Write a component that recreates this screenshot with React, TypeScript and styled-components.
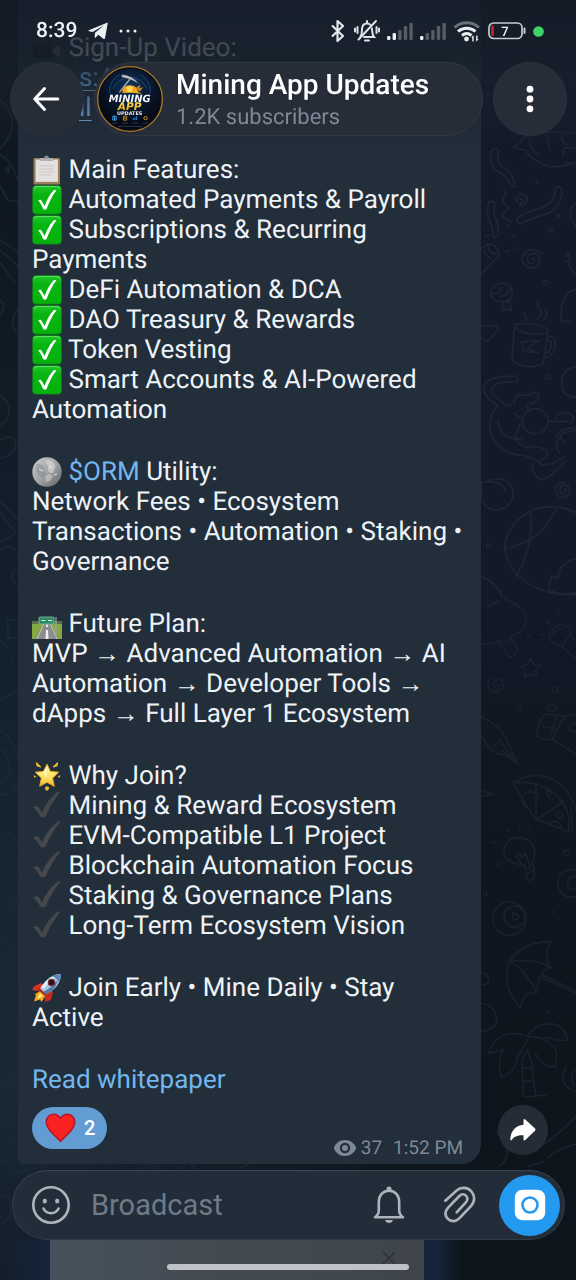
import React from "react";
import styled, { createGlobalStyle } from "styled-components";

const GlobalStyle = createGlobalStyle`
  * { box-sizing: border-box; }
  html { background: #101820; }
  body {
    margin: 0;
    font-family: Roboto, "Liberation Sans", sans-serif;
    text-rendering: geometricPrecision;
    color: #eef3f8;
  }
  button { border: 0; padding: 0; font: inherit; color: inherit; cursor: pointer; background: none; }
  svg { display: block; flex: none; }
  p, h1, ul { margin: 0; padding: 0; font-weight: 400; }
`;

const Page = styled.div`
  position: relative;
  isolation: isolate;
  min-height: 100vh;
  display: flex;
  flex-direction: column;
`;

const Wallpaper = styled.div`
  position: absolute;
  inset: 0;
  z-index: -1;
  overflow: hidden;
  background: linear-gradient(to bottom, #0e161e 0%, #101a24 25%, #142330 60%, #182834 85%, #131e28 100%);
  &::before {
    content: "";
    position: absolute;
    inset: 0;
    background: linear-gradient(to bottom, #131928 0%, #131928 45%, #0f161f 65%, #0d141b 100%);
    mask-image: linear-gradient(to right, transparent 5%, #000 80%);
  }
  svg { position: absolute; inset: 0; width: 100%; height: 100%; opacity: 0.8; }
`;

const Header = styled.header`
  position: fixed;
  top: 0;
  left: 0;
  right: 0;
  z-index: 2;
  padding-bottom: 14px;
  background: linear-gradient(
    to bottom,
    rgba(20, 28, 40, 0.84) 0%,
    rgba(22, 31, 42, 0.8) 36%,
    rgba(25, 34, 46, 0.62) 54%,
    rgba(28, 37, 49, 0.35) 76%,
    rgba(33, 45, 57, 0) 100%
  );
`;

const StatusBar = styled.div`
  display: flex;
  align-items: center;
  justify-content: space-between;
  height: 62px;
  padding: 0 32px 0 36px;
`;

const StatusGroup = styled.div<{ $gap: number }>`
  display: flex;
  align-items: center;
  gap: ${(p) => p.$gap}px;
`;

const Clock = styled.time`
  font-size: 21px;
  line-height: 24px;
  font-weight: 500;
`;

const NavRow = styled.div`
  display: flex;
  gap: 10px;
  padding: 0 9px 0 10px;
`;

const RoundButton = styled.button`
  flex: none;
  width: 74px;
  height: 74px;
  display: grid;
  place-items: center;
  border-radius: 50%;
  background: #262d39;
  border: 1px solid #2b333e;
`;

const ChatPill = styled.div`
  flex: 1;
  min-width: 0;
  height: 74px;
  display: flex;
  align-items: center;
  gap: 13px;
  padding-left: 2px;
  border-radius: 37px;
  background: #262d39;
  border: 1px solid #303842;
`;

const ChatTitle = styled.h1`
  padding-top: 4px;
  font-size: 28px;
  line-height: 32px;
  font-weight: 500;
  color: #fff;
  white-space: nowrap;
`;

const ChatMeta = styled.p`
  padding-top: 2px;
  font-size: 22px;
  line-height: 30px;
  color: #7f8894;
`;

const Chat = styled.main`
  flex: 1;
  display: flex;
  align-items: flex-end;
  gap: 17px;
  padding: 0 28px 6px 18px;
`;

const Bubble = styled.article`
  flex: 1;
  min-width: 0;
  align-self: stretch;
  padding: 33px 18px 15px 14px;
  border-radius: 0 0 20px 6px;
  background: #222e3a;
`;

const Message = styled.div`
  display: flex;
  flex-direction: column;
  gap: 32px;
  font-size: 26px;
  line-height: 30px;
`;

const LineList = styled.ul`
  list-style: none;
`;

const Link = styled.a<{ $underlined?: boolean }>`
  color: #72b7ee;
  text-decoration: ${(p) => (p.$underlined ? "underline" : "none")};
  text-decoration-thickness: 1px;
  text-underline-offset: 4px;
`;

const LinkLine = styled.p`
  padding-left: 47px;
`;

const EmojiBox = styled.span`
  display: inline-block;
  vertical-align: top;
  width: 30px;
  height: 30px;
`;

const BubbleFooter = styled.footer`
  display: flex;
  justify-content: space-between;
  align-items: flex-end;
  margin-top: 12px;
`;

const Reaction = styled.button`
  display: flex;
  align-items: center;
  gap: 8px;
  height: 42px;
  padding: 0 12px 0 13px;
  border-radius: 21px;
  background: #629cd2;
  color: #fff;
  font-size: 20px;
  line-height: 24px;
  font-weight: 500;
`;

const MessageMeta = styled.div`
  display: flex;
  align-items: center;
  gap: 4px;
  height: 22px;
  margin-bottom: -10px;
  font-size: 19px;
  line-height: 22px;
  color: #7d8995;
  time { margin-left: 7px; }
`;

const ForwardButton = styled.button`
  flex: none;
  width: 50px;
  height: 50px;
  margin-bottom: 9px;
  display: grid;
  place-items: center;
  border-radius: 50%;
  background: #242c35;
`;

const Composer = styled.form`
  display: flex;
  align-items: center;
  height: 70px;
  margin: 0 11px 0 12px;
  padding: 0 4px 0 18px;
  border-radius: 35px;
  border: 1px solid #303c48;
  border-top-color: #3b4753;
  background: #222d39;
`;

const ComposerInput = styled.input`
  flex: 1;
  min-width: 0;
  height: 40px;
  margin-left: 20px;
  padding: 0;
  border: 0;
  outline: 0;
  background: none;
  color: #eef3f8;
  font: 29px/40px Roboto, "Liberation Sans", sans-serif;
  &::placeholder { color: #6d7a88; opacity: 1; }
`;

const ComposerTools = styled.div`
  display: flex;
  align-items: center;
  gap: 38px;
  margin-right: 22px;
`;

const CameraButton = styled.button`
  flex: none;
  width: 61px;
  height: 61px;
  display: grid;
  place-items: center;
  border-radius: 50%;
  background: #2399f0;
`;

const BottomArea = styled.footer`
  position: relative;
  height: 40px;
  padding: 0 124px 0 18px;
  background: linear-gradient(to right, transparent, #14243a 8%, #14243a 76%, transparent 80%);
`;

const Keyboard = styled.div`
  height: 40px;
  display: flex;
  justify-content: flex-end;
  margin: 0 28px 0 32px;
  background: linear-gradient(to right, #46515b, #42494f 60%, #3f454b);
`;

const CloseButton = styled.button`
  width: 30px;
  height: 36px;
  margin-right: 20px;
  display: grid;
  place-items: center;
`;

const HomeIndicator = styled.div`
  position: absolute;
  left: 29%;
  right: 29%;
  bottom: 10px;
  height: 6px;
  border-radius: 3px;
  background: #bfc3c8;
`;

/* ---------- emoji ---------- */

const emojiArt = {
  clipboard: (
    <>
      <rect x="1.500" y="3" width="26.500" height="26.500" rx="1.500" fill="#9a7d58" />
      <rect x="3.500" y="4.500" width="22.500" height="22.500" fill="#d9d6d3" />
      <path d="M4 5h21.500v21H4z" fill="#e3e0de" />
      <path d="M7 11h15M7 14h15M7 17h15M7 20h12" stroke="#c9c6c5" strokeWidth="1" />
      <path d="M8 3h13v3H8z" fill="#aeb2b6" />
      <path d="M12 3.500a2.500 3 0 0 1 5 0z" fill="#858a90" />
    </>
  ),
  check: (
    <>
      <rect x="0.300" y="0.300" width="29.400" height="29.200" rx="4" fill="#0b8f12" />
      <rect x="1" y="1" width="28" height="27.500" rx="3.500" fill="url(#checkFill)" />
      <path d="M2 3.500Q3 1.500 6 1.500H24Q27 1.500 28 3.500" fill="none" stroke="#5fdd62" strokeWidth="1.200" />
      <path d="M6.200 15.500c1.800-1.300 3-.6 3.800.9l2.600 4.500C15 14.500 18 9 21.800 5.300c.8-.6 2-.3 2.500.2C20 11 17 17.500 14.600 24c-.8 1-2.600 1-3.400 0-1.500-3.500-3-6.200-5-8.500z" fill="#fff" />
    </>
  ),
  moon: (
    <>
      <circle cx="15" cy="15" r="14.700" fill="url(#moonFill)" />
      <path d="M5 7c3 0 4 0 6 2s0 4 2 6 1 4 0 6-5-1-7-4-4-5-1-10z" fill="#85878a" opacity=".5" />
      <path d="M15 3c4 0 7 2 8 5s-1 4-1 6-3 3-5 1 0-4-1-6-3-3-1-6z" fill="#dcdddd" opacity=".6" />
      <path d="M13 19l5-2 3 2-3 5-4 1z" fill="#d6d7d7" opacity=".5" />
      <path d="M7 12l4 2M22 18l3-1M17 9l3 2" stroke="#ededed" strokeWidth="1" />
    </>
  ),
  motorway: (
    <>
      <rect x="0" y="13" width="30" height="17" fill="#83a943" />
      <rect x="0" y="12" width="30" height="3" fill="#5a6f4c" />
      <path d="M13 13h4l10 17H3z" fill="#8b8d91" />
      <path d="M14.500 15h1l.5 3h-2zM14 21h2l.5 9h-3z" fill="#f2f2f2" />
      <path d="M12 14 5 30M18 14l7 16" stroke="#d6d3bd" strokeWidth=".8" />
      <path d="M7.500 9v7M24 8v20" stroke="#9ea5ab" strokeWidth="1.200" />
      <rect x="7" y="8" width="15" height="7" rx="1" fill="#2f8b67" stroke="#7fbf9f" strokeWidth=".8" />
      <path d="M9.500 11.500h4M16 11.500h4" stroke="#d7efe2" strokeWidth="1" />
    </>
  ),
  star: (
    <>
      <path d="M15 3.200l3.400 7.200 8.200.8-6 5.900 1.700 8.200-7.300-4-7.300 4 1.700-8.200-6-5.900 8.200-.8z" fill="url(#starFill)" stroke="#eba92a" strokeWidth="1" strokeLinejoin="round" />
      <path d="M15 5v12l-4.500-5.500z" fill="#fff8bb" opacity=".8" />
      <path d="M4.500 1.500 9 6 5 5z M25.500 1.500 21 6l4-1z M13.500 26h3l-.5 3h-2z" fill="#f0b62f" stroke="#f0b62f" strokeLinejoin="round" />
      <path d="M1.500 14.500l3 .5-2 2zM28.500 14.500l-3 .5 2 2z" fill="#f0b62f" />
    </>
  ),
  tick: (
    <path d="M1.300 16.500c2-1.700 4.500-1.900 5.800.2l3 4.700C13.500 13 19 6 25.500.8c.8-.6 2.300-.7 2.900 0C23 7.500 17.500 16 14 25c-1 1.700-4.300 2-5.700.4C6 21.500 4 18.500 1.300 16.500z" fill="#45474a" />
  ),
  rocket: (
    <>
      <path d="M2 13.500 9 10l4 3-6 5-7-1z" fill="#d8341f" />
      <path d="M13 20l5-4 3 3-2 8-6 2z" fill="#c92a1b" />
      <path d="M8 18 2.500 21.500 4 22l-2 6.500 6-2 1.500 2.500 4.500-7z" fill="#f6a31d" />
      <path d="M8 20l-3 6 6-3z" fill="#fff08a" />
      <path d="M29 1c-8 0-15 4.500-21 14.500l5.500 6C23 17 29 10 29 1z" fill="#a8c8e4" />
      <path d="M29 1C21 2 14 7 9.500 14l2 2C17 9 22 4 29 1z" fill="#eaf4fc" />
      <path d="M29 1c-3 0-6.500.8-9 2.200 3 .8 6 3.500 7 6.300C28.500 7 29 4 29 1z" fill="#5d86b1" />
      <path d="M11 19c6-3 11-7 14.500-12C25 14 19 20 13.500 21.500z" fill="#527ba6" />
      <circle cx="19.500" cy="9.500" r="3.800" fill="#7e2a31" />
      <circle cx="19.500" cy="9.500" r="2.500" fill="#191823" />
      <path d="M7 14.500l8 8-1 1.500-8.500-8z" fill="#b6261c" />
    </>
  ),
  camera: (
    <>
      <rect x="1" y="12" width="19" height="13" rx="3" fill="#16181c" />
      <circle cx="7" cy="8" r="5" fill="#24272c" />
      <circle cx="17" cy="8" r="4.500" fill="#1b1e23" />
      <path d="M21 16l7-4v12l-7-4z" fill="#5b6066" />
    </>
  ),
};

const Emoji = ({ name, label }: { name: keyof typeof emojiArt; label: string }) => (
  <EmojiBox role="img" aria-label={label}>
    <svg width="30" height="30" viewBox="0 0 30 30">{emojiArt[name]}</svg>
  </EmojiBox>
);

const DefsSvg = styled.svg`
  position: absolute;
  width: 0;
  height: 0;
`;

const EmojiDefs = () => (
  <DefsSvg aria-hidden="true">
    <defs>
      <linearGradient id="checkFill" x1="0" y1="0" x2="0" y2="1">
        <stop offset="0" stopColor="#1fc62a" />
        <stop offset=".3" stopColor="#08b412" />
        <stop offset="1" stopColor="#05b20c" />
      </linearGradient>
      <linearGradient id="moonFill" x1="0" y1="0" x2="1" y2="1">
        <stop offset="0" stopColor="#cfd0d0" />
        <stop offset=".5" stopColor="#a3a5a6" />
        <stop offset="1" stopColor="#616365" />
      </linearGradient>
      <linearGradient id="starFill" x1="0" y1="0" x2="0" y2="1">
        <stop offset="0" stopColor="#fff3a0" />
        <stop offset=".6" stopColor="#fbe063" />
        <stop offset="1" stopColor="#f3b52e" />
      </linearGradient>
    </defs>
  </DefsSvg>
);

/* ---------- status icons ---------- */

const PlaneIcon = () => (
  <svg width="20" height="18" viewBox="0 0 60 54">
    <path d="M2 25 57 2q3-1 2 3L51 49q-1 4-5 1L31 38l-9 9q-2 1-2-2l1-13L48 10 14 30 3 28q-3-1-1-3z" fill="#eef1f4" />
  </svg>
);

const DotsIcon = () => (
  <svg width="18" height="18" viewBox="0 0 18 18" fill="#eef1f4">
    <circle cx="2" cy="9" r="1.500" />
    <circle cx="9" cy="9" r="1.500" />
    <circle cx="16" cy="9" r="1.500" />
  </svg>
);

const BluetoothIcon = () => (
  <svg width="17" height="24" viewBox="0 0 17 24" fill="none" stroke="#e4e8ec" strokeWidth="2.200">
    <path d="M2 6.500 13 17l-5.500 5V2L13 7 2 17.500" strokeLinejoin="round" />
  </svg>
);

const MutedBellIcon = () => (
  <svg width="26" height="24" viewBox="0 0 26 24" fill="none" stroke="#dfe3e8" strokeWidth="2" strokeLinecap="round">
    <path d="M6.500 17.500c1.800-2 1.300-4.500 1.500-7.500.2-3 2-5.500 5-5.500 1.500 0 2.700.5 3.500 1.500M18 9.500c.3 3-.2 6 2 8.500H10" />
    <path d="M13 2v2M11 21.500h4M3.500 8v6M1 9.500v3M22.500 8v6M25 9.500v3M22 2 4.500 20.500" />
  </svg>
);

const SignalIcon = ({ bars }: { bars: number }) => (
  <svg width="26" height="20" viewBox="0 0 26 20">
    {[4, 7, 10, 14, 17].map((h, i) => (
      <rect key={h} x={i * 5.6} y={19 - h} width="3.400" height={h} rx="1.200" fill={i < bars ? "#eceff2" : "#555d67"} />
    ))}
  </svg>
);

const WifiIcon = () => (
  <svg width="28" height="22" viewBox="0 0 28 22" fill="none" strokeWidth="3">
    <path d="M1.500 7.500C8.500 1 19 1 26 7.500" stroke="#68717b" />
    <path d="M5 11.500c5-4.500 12.500-4.500 17.500 0M9 15.500c3-2.500 6.500-2.500 9.500 0" stroke="#eceff2" />
    <circle cx="13.500" cy="19" r="2.400" fill="#eceff2" />
    <path d="M20 15.500 18.300 18h1v3.500h1.400V16zM23.500 21.500l2-2.500h-1v-3.500h-1.400v5z" fill="#eceff2" />
  </svg>
);

const BatteryIcon = () => (
  <svg width="38" height="18" viewBox="0 0 38 18">
    <rect x="1" y="1" width="33" height="15.500" rx="4.500" fill="none" stroke="#c7ccd2" strokeWidth="1.700" />
    <rect x="3.200" y="3.500" width="2.600" height="10.500" rx="1" fill="#d3212b" />
    <path d="M36.500 6.500v4.500" stroke="#c7ccd2" strokeWidth="2" strokeLinecap="round" />
    <text x="17" y="13.500" textAnchor="middle" fontSize="13" fontWeight="500" fill="#eef1f4" fontFamily="Roboto, sans-serif">7</text>
  </svg>
);

const PrivacyDot = () => (
  <svg width="11" height="11" viewBox="0 0 11 11">
    <circle cx="5.500" cy="5.500" r="5.300" fill="#3fd266" />
  </svg>
);

/* ---------- interface icons ---------- */

const BackIcon = () => (
  <svg width="28" height="26" viewBox="0 0 28 26" fill="none" stroke="#fff" strokeWidth="3" strokeLinecap="round" strokeLinejoin="round">
    <path d="M11.500 2.500 1.800 13l9.700 10.500M2.300 13h22.500" />
  </svg>
);

const MoreIcon = () => (
  <svg width="8" height="28" viewBox="0 0 8 28" fill="#fff">
    <circle cx="4" cy="4.200" r="3.400" />
    <circle cx="4" cy="14" r="3.400" />
    <circle cx="4" cy="23.800" r="3.400" />
  </svg>
);

const ForwardIcon = () => (
  <svg width="28" height="24" viewBox="0 0 28 24">
    <path d="M14.500 2.300q0-2 1.800-.7L26 10.600q1.200 1.100 0 2.200L16.300 22q-1.800 1.300-1.800-.8v-4C8.500 17 5 18.500 2.600 22q-1.300 1.300-1.300-.8C1.800 12.500 7 7.500 14.500 6.800z" fill="#fff" />
  </svg>
);

const HeartIcon = () => (
  <svg width="31" height="30" viewBox="0 0 31 30">
    <path d="M15.500 28.600C13 24.500 1.200 17.500 1.200 9.200 1.200 4.500 4.600 1.300 8.600 1.300c3 0 5.400 1.500 6.900 4.200 1.500-2.700 3.900-4.200 6.900-4.200 4 0 7.400 3.200 7.400 7.900 0 8.300-11.800 15.300-14.300 19.400z" fill="#fb2321" stroke="#b5162c" strokeWidth="1.500" strokeLinejoin="round" />
  </svg>
);

const EyeIcon = () => (
  <svg width="24" height="18" viewBox="0 0 24 18">
    <path fillRule="evenodd" d="M12 1C6.500 1 2.500 4.500.8 9c1.700 4.500 5.700 8 11.200 8s9.500-3.500 11.200-8C21.500 4.500 17.500 1 12 1zm0 2.800a5.200 5.200 0 1 1 0 10.400 5.200 5.200 0 0 1 0-10.400z" fill="#7d8995" />
    <circle cx="12" cy="9" r="3" fill="#7d8995" />
  </svg>
);

const SmileIcon = () => (
  <svg width="40" height="40" viewBox="0 0 40 40" fill="none" stroke="#adb3ba" strokeWidth="2.600" strokeLinecap="round">
    <circle cx="20" cy="20" r="17.700" />
    <path d="M12.500 23.500c1.500 3.200 4.300 4.700 7.500 4.700s6-1.500 7.500-4.700" />
    <ellipse cx="13.800" cy="16" rx="2.100" ry="2.600" fill="#adb3ba" stroke="none" />
    <ellipse cx="26.200" cy="16" rx="2.100" ry="2.600" fill="#adb3ba" stroke="none" />
  </svg>
);

const BellIcon = () => (
  <svg width="32" height="38" viewBox="0 0 32 38" fill="none" stroke="#adb3ba" strokeWidth="2.600" strokeLinejoin="round" strokeLinecap="round">
    <path d="M2 31.200c2.800-2 3.800-4 3.800-7V16C5.800 9 10 4.800 16 4.800S26.200 9 26.200 16v8.200c0 3 1 5 3.800 7z" />
    <circle cx="16" cy="3" r="2.500" fill="#adb3ba" stroke="none" />
    <path d="M12 34h8c-.7 2-2.200 3-4 3s-3.300-1-4-3z" fill="#adb3ba" stroke="none" />
  </svg>
);

const ClipIcon = () => (
  <svg width="34" height="38" viewBox="0 0 102 114" fill="none" stroke="#adb3ba" strokeWidth="8" strokeLinecap="round">
    <path d="M7 44 40 14C54 2 73 3 85 16s11 32-2 45L48 98c-10 10-25 10-34 0s-8-23 2-34L49 30c7-7 15-6 20-1s6 14-1 21L41 79" />
  </svg>
);

const CameraIcon = () => (
  <svg width="32" height="32" viewBox="0 0 32 32">
    <path d="M9 .8h14c5 0 8.200 3.200 8.200 8.200v14c0 5-3.200 8.200-8.200 8.200H9C4 31.200.8 28 .8 23V9C.8 4 4 .8 9 .8z" fill="#fff" />
    <circle cx="16" cy="16" r="7.500" fill="none" stroke="#2399f0" strokeWidth="2.600" />
  </svg>
);

const CloseIcon = () => (
  <svg width="14" height="14" viewBox="0 0 14 14" stroke="#2c3238" strokeWidth="1.500">
    <path d="M1 1l12 12M13 1 1 13" />
  </svg>
);

const logoFont = '"DejaVu Sans", sans-serif';

const Avatar = () => (
  <svg width="66" height="66" viewBox="0 0 200 200" role="img" aria-label="Mining App Updates">
    <defs>
      <radialGradient id="avatarGlow" cx=".5" cy=".3" r=".6">
        <stop offset="0" stopColor="#12365f" />
        <stop offset=".5" stopColor="#0a1a33" />
        <stop offset="1" stopColor="#060a14" />
      </radialGradient>
      <linearGradient id="goldText" x1="0" y1="0" x2="0" y2="1">
        <stop offset="0" stopColor="#ffe866" />
        <stop offset="1" stopColor="#e7a410" />
      </linearGradient>
    </defs>
    <circle cx="100" cy="100" r="98" fill="#080d18" stroke="#a87b29" strokeWidth="4" />
    <circle cx="100" cy="100" r="92" fill="url(#avatarGlow)" />
    <path d="M48 70a56 56 0 0 1 104 0M40 84c-6-22 8-46 28-58M160 84c6-22-8-46-28-58" fill="none" stroke="#184a86" strokeWidth="3" />
    <path d="M75 26q32 2 52 28q-28-18-52-20z" fill="#c9d0d6" stroke="#39424d" strokeWidth="2" />
    <path d="M104 34 68 80" stroke="#a9b0b6" strokeWidth="4" />
    <path d="M77 82q-2-22 20-24q24-1 28 20l11 7q-30-6-59-3z" fill="#f2a71b" />
    <path d="M90 64q8-6 18-1l-2 16H92z" fill="#ffd65a" />
    <path d="M118 66l14-10-4 12 12-4-10 14z" fill="#c9861a" />
    <text x="99" y="109" textAnchor="middle" fontFamily={logoFont} fontWeight="700" fontStyle="italic" fontSize="30" fill="#f6f8fa">MINING</text>
    <text x="99" y="133" textAnchor="middle" fontFamily={logoFont} fontWeight="700" fontStyle="italic" fontSize="32" fill="url(#goldText)">APP</text>
    <text x="99" y="147" textAnchor="middle" fontFamily={logoFont} fontWeight="700" fontSize="15" fill="#e8edf2">UPDATES</text>
    <g strokeWidth="3" fill="none">
      <path d="M48 152h10v12H48zM53 152v12" stroke="#3aa0e8" />
      <path d="M80 152h10v12H80zM80 158h10" stroke="#b98533" />
      <path d="M110 164v-6M115 164v-9M120 164v-12" stroke="#2f86d8" />
      <circle cx="147" cy="158" r="5" stroke="#c0933a" />
    </g>
    <path d="M45 173h18M76 173h18M107 173h18M138 173h18M62 183h76" stroke="#26364b" strokeWidth="3" />
  </svg>
);

/* ---------- wallpaper doodles ---------- */

const Doodles = () => (
  <svg viewBox="0 0 576 1280" preserveAspectRatio="xMidYMid slice" fill="none" strokeLinecap="round" strokeLinejoin="round" aria-hidden="true">
    <g transform="translate(476 130) scale(.3333)" stroke="#20283a" strokeWidth="5">
      <path d="M112 50q24-8 32-30l56-14 100 2M112 50q14 10 38 10 8 26 70 50 46 2 80-14M160 24q0 30 28 52M210 10l12 50M258 10q-6 30 20 34M262 76q-6-26 16-22 16 4 22-2M270 96l20 8" />
      <path d="M50 58q12-6 20 4-14 34 10 50 34 18 36 58-10 4-14-4-4-24-34-40-38-22-18-68z" />
      <path d="M82 178q10 12 2 24t6 22-4 22 6 22-2 22" />
      <path d="M132 208q8-6 8 4-4 12-14 6-10-14 4-24 20-6 24 14-4 20-24 18" />
      <path d="M38 218q8-8 20 0-10 28 2 50 10 24 6 50-10 8-16 0 2-24-8-42-14-30-4-58z" />
      <path d="M238 174q12-8 20 2 2 60-52 78-36 8-68 26-16 0-16-14 26-22 62-28 56-14 54-64z" />
      <path d="M16 355l20-14q28 2 34 34L16 434M36 341q-2 30 34 34M24 360q4 20 22 26M28 322l10-6M106 310l10 12M88 365l10-4M114 354l6 2" />
      <path d="M168 388q6-8 8 2-4 14-18 8-12-16 6-26 22-6 28 14-2 28-28 28-28-6-24-32 10-24 32-22 20 4 26 12" />
      <path d="M44 488q6-30 38-28 30 6 26 38-10 22-40 16-24-6-24-26zM52 490q20 4 24-20M80 516l20-2 6 28-12-6-14 8zM70 500q20 0 30-20" />
      <path d="M116 588l-8 98q4 18 46 24 46 0 48-12l14-94q-4-18-50-22-48-4-50 6zM118 592q10 18 58 20 38 0 40-8M216 618q24 0 22 28-4 30-32 38M216 630q12 2 10 18-4 20-16 20M136 636l56-4-38 22 34 14-44-4zM144 550q10 12 6 24M190 510q-10 10-4 20 14 12 8 24-4 12-16 18M210 540q6 20-10 32" />
      <path d="M16 586l20 2q34-8 30 16l-16 10-14 20-20-10" />
      <path d="M22 776q0-38 100-38 8 10-2 18-70-4-72 24 2 20 26 30l14 16 28-6q-4-20 14-26 28 6 42-6 20 4 16 16-8 16-26 16M22 776q8 32 44 50-34 40-20 86 20 50 76 62 40 0 76 30 30 4 66-24M66 870q0 20 14 40 20 20 60 16M140 874a38 38 0 1 0 76 0 38 38 0 1 0-76 0M136 876l-20 46q6 20 36 30 40-6 60 10 10 20-20 30M112 850l26 16M150 824l10 20M216 874h60M240 866q6-22 34-18 28 10 12 30M238 920q20-30 62-26M250 970q-20-30 10-60l40-10M254 920l10 20M168 1006q0 30 26 42 28-2 44-28 20-8 26-26" />
      <path d="M16 1058l34-10q50-10 62 38-4 50-50 54-40 0-46-44zM30 1056q50-6 60 30" />
      <path d="M262 1080q8-8 8 4-6 12-16 4-8-18 8-24 20 2 20 20-8 24-30 18-20-14-12-34 12-14 26-10" />
      <path d="M86 1256q4-80 90-118 60-20 124 10M86 1256q14 80 94 118 60 24 120 20M164 1144q10 110-44 194M86 1256q110-20 154-120M226 1338l-8 40q40 24 82 10M226 1338l18 8 10-32 26-22 20-6" />
      <path d="M16 1340q50 20 62 60l60 38M40 1430l26-16" />
      <path d="M300 220q-20 10-16 40l16 30M300 478q-50 10-44 96h30M300 710q-50 8-42 60 2 30 42 32M270 380l8-10 4 24-12 2M280 400q0 20 20 30" />
      <g strokeWidth="4">
        <circle cx="182" cy="156" r="3" /><circle cx="248" cy="258" r="4" /><circle cx="224" cy="300" r="6" />
        <circle cx="206" cy="459" r="7" /><circle cx="218" cy="740" r="7" /><circle cx="38" cy="1248" r="7" />
      </g>
    </g>
    <g transform="translate(476 600) scale(.3333)" stroke="#1b2530" strokeWidth="5">
      <path d="M86 0q60 10 64 60-4 40-40 44-8 30-44 18-20 16-50 8M66 122l32 48q22 4 28-22l-24-42M50 10l14-6" />
      <path d="M164 176l10 18 20 4-14 14 4 18-20-8-18 8 2-18-14-14 20-4z" />
      <path d="M62 256q8-4 6 6-10 8-16-4 0-20 18-20 18 8 8 28-20 20-36 4-12-22 2-36" />
      <path d="M220 108q2-26 40-36 22 8 26 30l-30 36q-30 0-36-30zM230 104q8-16 28-20M256 138l44 40M278 104l22 20M210 66l10 6M246 40l4 12M194 104l10 2" />
      <path d="M16 350q50 24 72 60l36 80-34-24-28-6q-28-18-46-50M50 440l20-20 50 64M76 450l24 20" />
      <path d="M206 342q-22 30-24 64 20 16 46 12l38-70M206 342l60 8 34-6M228 418l72 44M212 332q-4-16 20-20 18 6 4 20zM240 350l-16 60M200 378l30 8M300 370q-28 0-20 20l20 6" />
      <path d="M112 552q40-36 96-22 70 20 92 104M112 552l12 20 52 84 102 40q8-60-30-104-50-50-124-44-8-6-12-4M180 552v104M180 660l84-56M150 620a24 24 0 1 1 36-24M208 572l20 4-10 16zM240 640q20-18 20 10-14 16-20-10M224 670q20-18 32 14M252 600l20 26M290 696l-6-80" />
      <path d="M146 796q-62-8-62-44 4-38 44-40 46 4 48 48-4 34-20 46M146 796l8 40q10 14 22-10l-4-34M118 770l10-12 10 16 10-16 12 36M122 770l20 30M96 694l-4-6M130 684v-4M160 690l4-6M60 730l-8-4M70 790l-8 4M150 820l24-6" />
      <path d="M50 956a50 50 0 1 1 100 0 50 50 0 1 1-100 0M84 950a32 32 0 1 1 64 0 32 32 0 1 1-64 0M110 938l16 6q6 16-14 16z" />
      <path d="M100 1084q44-60 126-60-28 40 0 80-32-6-46 76-40-8-46 44-60-60-34-140zM100 1084q80-10 126 20M100 1084q54 30 82 96M190 1130l110 50M196 1124l104 48" />
      <path d="M154 1310q-40-20-80 0-26 20-36 50l34-8 10-4q-20 40-6 84 40-10 48-60l20-34 16-28M154 1310q20-40 80-38 36 10 40 48-30 4-44-4l-28-4M154 1310q60 0 86 40 4 20-2 50-36 4-60-40M138 1400q0-30 16-50 18 40 16 70l10 70M138 1400l4 90M138 1400l12 6 18-6M140 1440q20 10 32-4M150 1490l60-4" />
      <path d="M300 810q-60-4-54 40 8 50 54 40M300 830q-28 0-26 24 4 18 26 14M16 1120q20 0 22 18-4 20-22 16M16 1210q44 6 46 50-4 30-46 34M16 570l36 14-36 4M300 1410q-24 10-6 44" />
      <g strokeWidth="4">
        <circle cx="238" cy="270" r="8" /><circle cx="130" cy="322" r="5" /><circle cx="158" cy="106" r="4" />
        <circle cx="272" cy="758" r="8" /><circle cx="28" cy="884" r="4" /><circle cx="230" cy="936" r="4" />
        <circle cx="214" cy="1236" r="4" />
      </g>
    </g>
    <g stroke="#1b2833" strokeWidth="1.600">
      <path d="M496 1132q20 20 4 34M540 1146q16-8 36-30M548 1158q10-10 28-14M528 1166l16-4M566 1068q-10 16 10 24" />
      <path d="M140 1170q10-10 18 0M180 1170l8-8 10 8M240 1168l14-6" />
    </g>
    <g stroke="#1d2b37" strokeWidth="1.600">
      <path d="M0 100q14 10 12 28-4 14-12 20M0 154q12 8 18 26M0 186l8 14 10 2M6 168h3v4H6zM0 240l18 12M0 250l18 16M0 262l14 20M18 310q-8 8-4 18l4 4M0 300q8 6 0 14" />
      <path d="M0 396q12 6 8 22l-8 8M0 440q16-8 16 6-2 10-16 12M0 500l18 20M0 512l16 22-16 8M0 550q10-8 18 4M18 568q-10 6-4 14l4 4" />
      <path d="M8 620h10M8 620v18h10M0 640l6 6M12 660l2 6M0 700l18-10M0 730q22 16 20 50-8 18-20 14M0 748q10 8 10 26l-10 8" />
      <path d="M0 836q12-6 16 4-2 10-12 8M0 874q14-8 18 8M8 902l8-4 2 8-6 6zM0 940q14 4 10 18l-10 6M0 992q12-8 16 6-4 8-16 10M0 1020q12 6 18 2" />
      <path d="M0 1054q12 2 18 10M0 1064q16 4 16 14L4 1104H0M4 1086a2 2 0 1 1 0 1M10 1084a2 2 0 1 1 0 1M18 1134q-12 4-10 16l10 8M0 1162q12-2 14 8 10 4 22-2l12-4M0 1196q14-2 10 20l-10 10" />
    </g>
  </svg>
);

/* ---------- content ---------- */

const features = [
  "Automated Payments & Payroll",
  "Subscriptions & Recurring Payments",
  "DeFi Automation & DCA",
  "DAO Treasury & Rewards",
  "Token Vesting",
  "Smart Accounts & AI-Powered Automation",
];

const reasons = [
  "Mining & Reward Ecosystem",
  "EVM-Compatible L1 Project",
  "Blockchain Automation Focus",
  "Staking & Governance Plans",
  "Long-Term Ecosystem Vision",
];

export default function App() {
  return (
    <Page>
      <GlobalStyle />
      <EmojiDefs />
      <Wallpaper><Doodles /></Wallpaper>

      <Header>
        <StatusBar>
          <StatusGroup $gap={11}>
            <Clock>8:39</Clock>
            <PlaneIcon />
            <DotsIcon />
          </StatusGroup>
          <StatusGroup $gap={7}>
            <BluetoothIcon />
            <MutedBellIcon />
            <SignalIcon bars={2} />
            <SignalIcon bars={1} />
            <WifiIcon />
            <BatteryIcon />
            <PrivacyDot />
          </StatusGroup>
        </StatusBar>
        <NavRow>
          <RoundButton aria-label="Back"><BackIcon /></RoundButton>
          <ChatPill>
            <Avatar />
            <div>
              <ChatTitle>Mining App Updates</ChatTitle>
              <ChatMeta>1.2K subscribers</ChatMeta>
            </div>
          </ChatPill>
          <RoundButton aria-label="More options"><MoreIcon /></RoundButton>
        </NavRow>
      </Header>

      <Chat>
        <Bubble>
          <Message>
            <div>
              <p><Emoji name="camera" label="Video camera" /> Sign-Up Video:</p>
              <LinkLine><Link href="#video" $underlined>s:/</Link></LinkLine>
              <LinkLine><Link href="#video" $underlined>ll</Link></LinkLine>
            </div>
            <div>
              <p><Emoji name="clipboard" label="Clipboard" /> Main Features:</p>
              <LineList>
                {features.map((f) => (
                  <li key={f}><Emoji name="check" label="Check" /> {f}</li>
                ))}
              </LineList>
            </div>
            <div>
              <p><Emoji name="moon" label="Moon" /> <Link href="#orm">$ORM</Link> Utility:</p>
              <p>Network Fees • Ecosystem Transactions • Automation • Staking • Governance</p>
            </div>
            <div>
              <p><Emoji name="motorway" label="Motorway" /> Future Plan:</p>
              <p>MVP → Advanced Automation → AI Automation → Developer Tools → dApps → Full Layer 1 Ecosystem</p>
            </div>
            <div>
              <p><Emoji name="star" label="Star" /> Why Join?</p>
              <LineList>
                {reasons.map((r) => (
                  <li key={r}><Emoji name="tick" label="Tick" /> {r}</li>
                ))}
              </LineList>
            </div>
            <p><Emoji name="rocket" label="Rocket" /> Join Early • Mine Daily • Stay Active</p>
            <p><Link href="#whitepaper">Read whitepaper</Link></p>
          </Message>
          <BubbleFooter>
            <Reaction aria-label="Heart, 2 reactions"><HeartIcon />2</Reaction>
            <MessageMeta>
              <EyeIcon />
              <span>37</span>
              <time>1:52 PM</time>
            </MessageMeta>
          </BubbleFooter>
        </Bubble>
        <ForwardButton aria-label="Forward"><ForwardIcon /></ForwardButton>
      </Chat>

      <Composer onSubmit={(e) => e.preventDefault()}>
        <button type="button" aria-label="Emoji"><SmileIcon /></button>
        <ComposerInput aria-label="Message" placeholder="Broadcast" />
        <ComposerTools>
          <button type="button" aria-label="Notifications"><BellIcon /></button>
          <button type="button" aria-label="Attach"><ClipIcon /></button>
        </ComposerTools>
        <CameraButton type="button" aria-label="Record video"><CameraIcon /></CameraButton>
      </Composer>

      <BottomArea>
        <Keyboard>
          <CloseButton aria-label="Close"><CloseIcon /></CloseButton>
        </Keyboard>
        <HomeIndicator />
      </BottomArea>
    </Page>
  );
}
